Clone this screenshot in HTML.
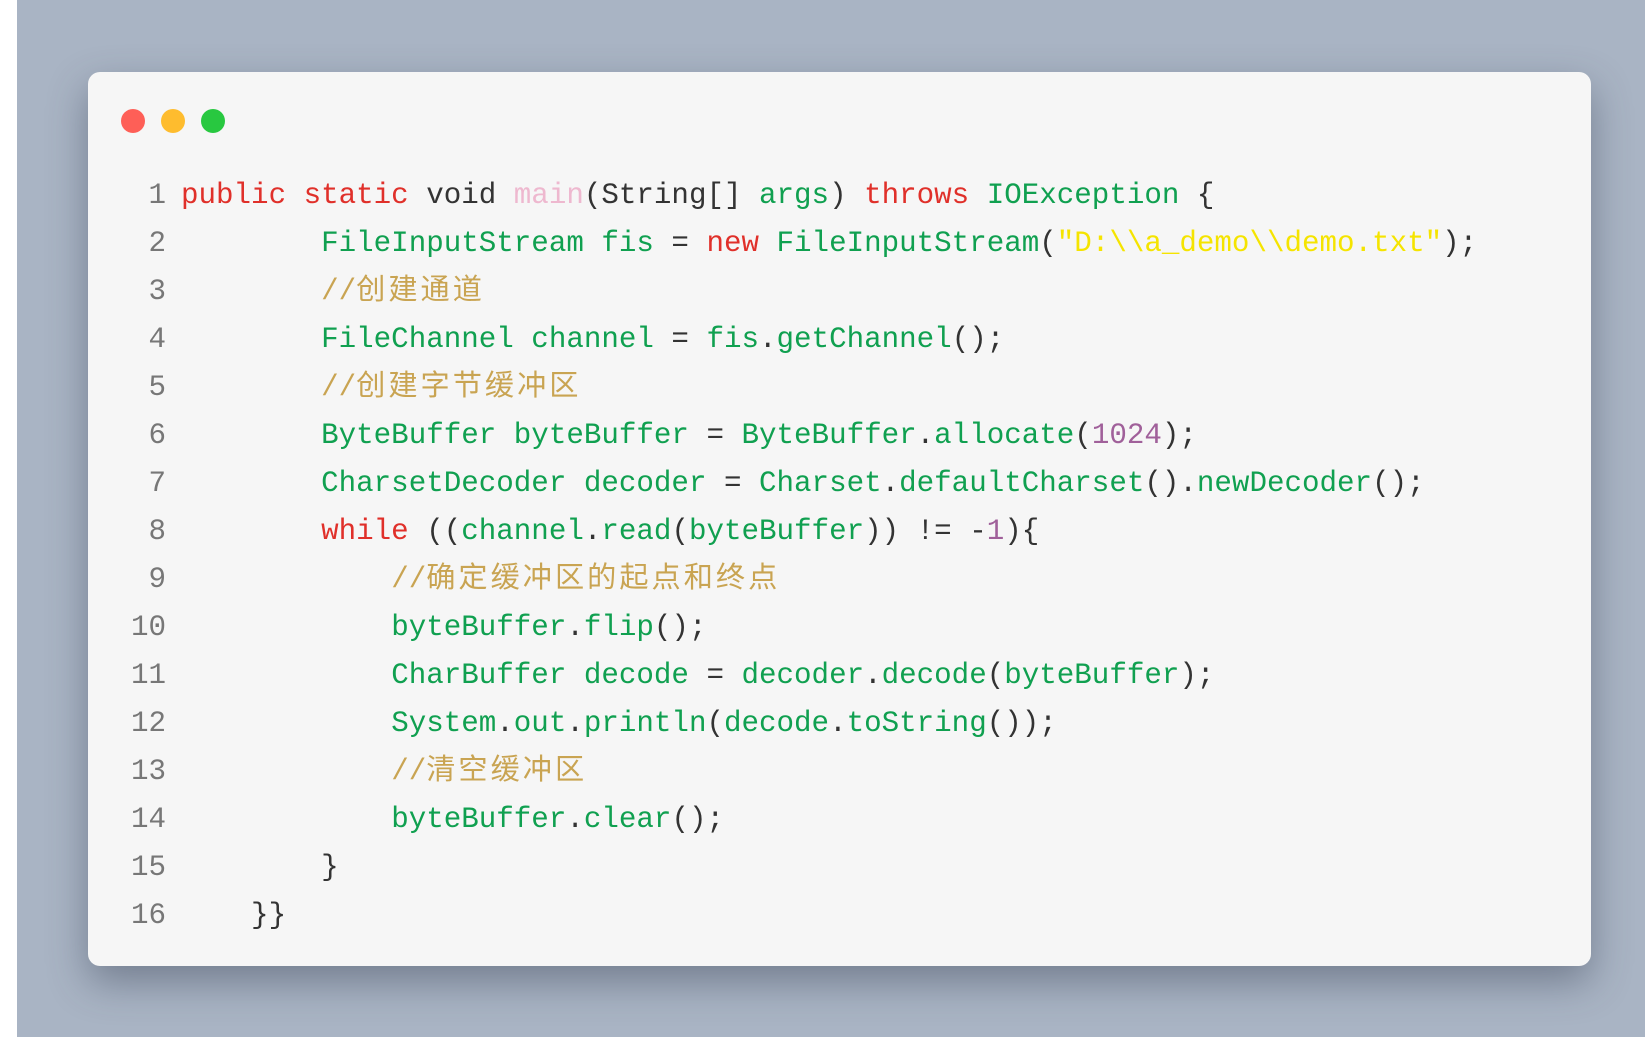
<!DOCTYPE html>
<html><head><meta charset="utf-8"><style>
html,body{margin:0;padding:0;width:1645px;height:1037px;overflow:hidden;background:#a9b4c4;}
.strip{position:absolute;left:0;top:0;width:17px;height:1037px;background:#fff;}
.card{position:absolute;left:88px;top:72px;width:1503px;height:894px;background:#f6f6f6;border-radius:12px;box-shadow:0 16px 40px rgba(50,60,80,.45);}
.dot{position:absolute;top:109px;width:24px;height:24px;border-radius:50%;}
.code{position:absolute;left:0;top:172px;font-family:"Liberation Mono","Noto Sans CJK SC",monospace;font-size:29.2px;line-height:48px;white-space:pre;color:#333;}
.ln{display:inline-block;width:166px;text-align:right;color:#777;margin-right:15px;}
.k{color:#e0302a}.g{color:#10a050}.c{color:#c9a452}.s{color:#f5e400}.n{color:#a0609a}.p{color:#eeb8cf}
.c .z{letter-spacing:3px}
</style></head><body>
<div class="strip"></div>
<div class="card"></div>
<div class="dot" style="left:121px;background:#fe5f57"></div>
<div class="dot" style="left:161px;background:#febc2e"></div>
<div class="dot" style="left:201px;background:#28c840"></div>
<div class="code"><div><span class="ln">1</span><span class="k">public</span> <span class="k">static</span> void <span class="p">main</span>(String[] <span class="g">args</span>) <span class="k">throws</span> <span class="g">IOException</span> {</div><div><span class="ln">2</span>        <span class="g">FileInputStream fis</span> = <span class="k">new</span> <span class="g">FileInputStream</span>(<span class="s">"D:\\a_demo\\demo.txt"</span>);</div><div><span class="ln">3</span>        <span class="c">//<span class="z">创建通道</span></span></div><div><span class="ln">4</span>        <span class="g">FileChannel channel</span> = <span class="g">fis</span>.<span class="g">getChannel</span>();</div><div><span class="ln">5</span>        <span class="c">//<span class="z">创建字节缓冲区</span></span></div><div><span class="ln">6</span>        <span class="g">ByteBuffer byteBuffer</span> = <span class="g">ByteBuffer</span>.<span class="g">allocate</span>(<span class="n">1024</span>);</div><div><span class="ln">7</span>        <span class="g">CharsetDecoder decoder</span> = <span class="g">Charset</span>.<span class="g">defaultCharset</span>().<span class="g">newDecoder</span>();</div><div><span class="ln">8</span>        <span class="k">while</span> ((<span class="g">channel</span>.<span class="g">read</span>(<span class="g">byteBuffer</span>)) != -<span class="n">1</span>){</div><div><span class="ln">9</span>            <span class="c">//<span class="z">确定缓冲区的起点和终点</span></span></div><div><span class="ln">10</span>            <span class="g">byteBuffer</span>.<span class="g">flip</span>();</div><div><span class="ln">11</span>            <span class="g">CharBuffer decode</span> = <span class="g">decoder</span>.<span class="g">decode</span>(<span class="g">byteBuffer</span>);</div><div><span class="ln">12</span>            <span class="g">System</span>.<span class="g">out</span>.<span class="g">println</span>(<span class="g">decode</span>.<span class="g">toString</span>());</div><div><span class="ln">13</span>            <span class="c">//<span class="z">清空缓冲区</span></span></div><div><span class="ln">14</span>            <span class="g">byteBuffer</span>.<span class="g">clear</span>();</div><div><span class="ln">15</span>        }</div><div><span class="ln">16</span>    }}</div></div>
</body></html>
